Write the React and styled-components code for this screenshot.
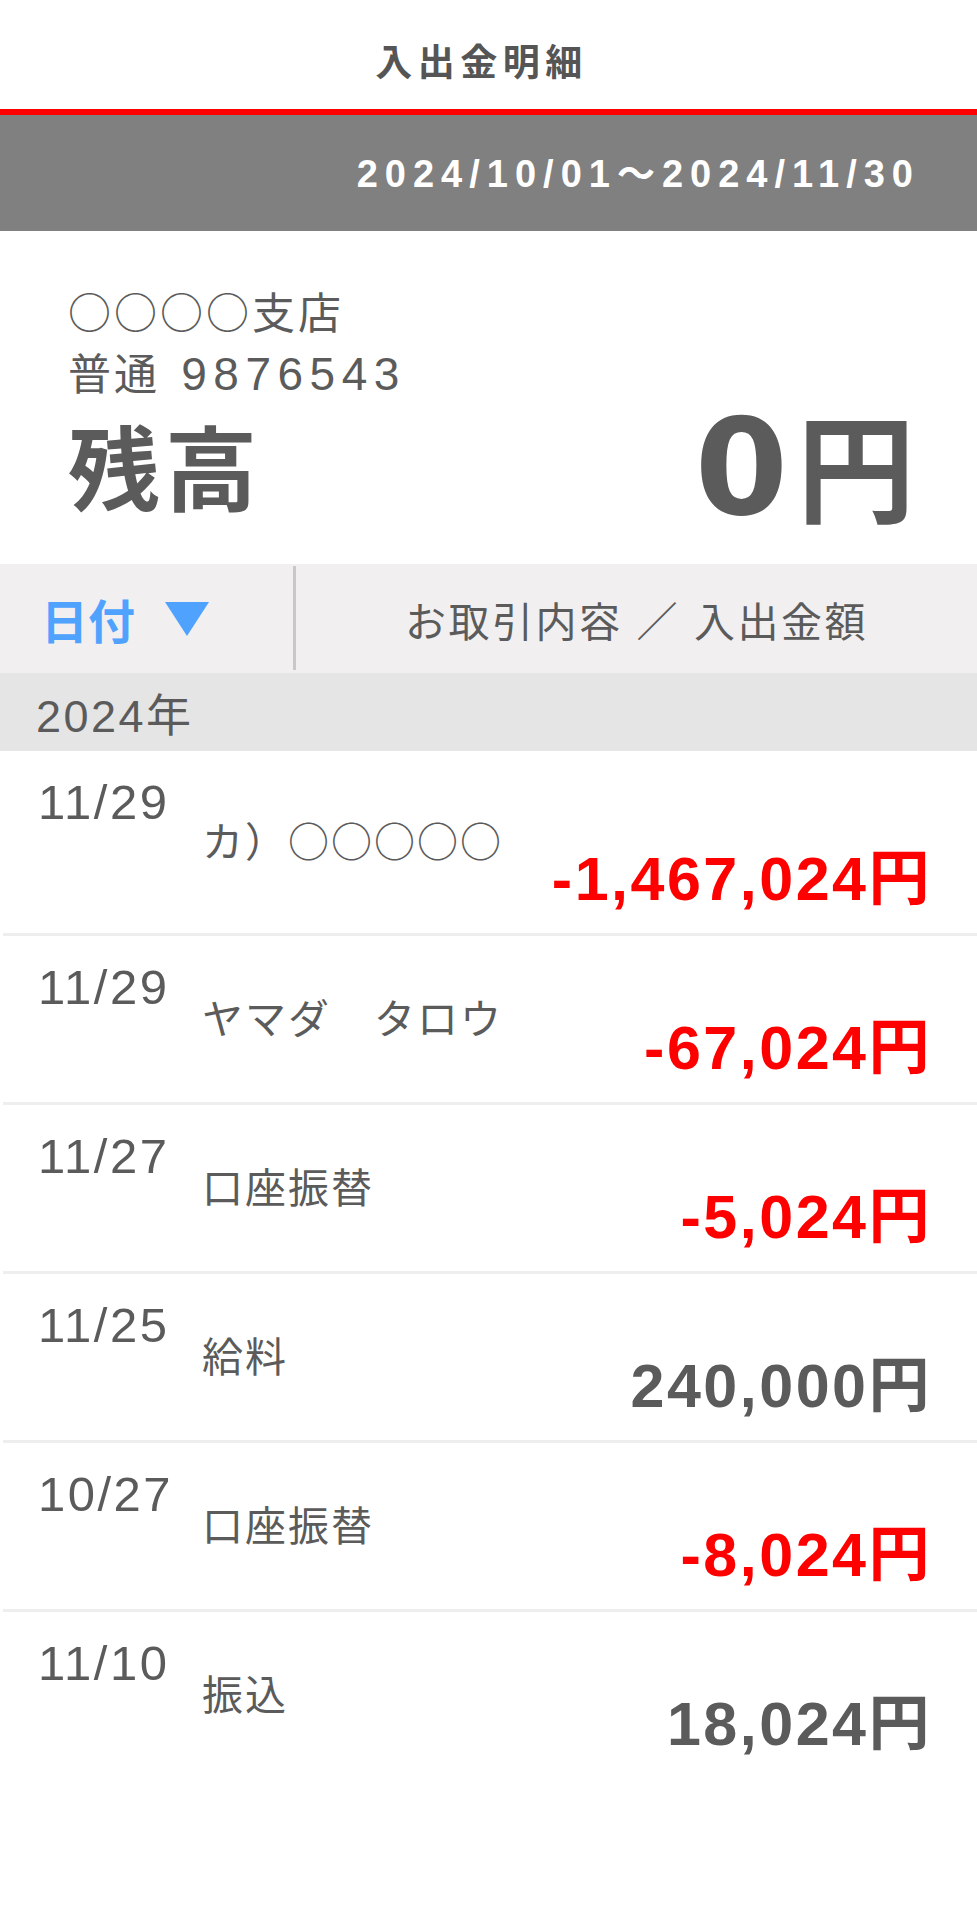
import React from "react";
import styled, { createGlobalStyle } from "styled-components";

const GlobalStyle = createGlobalStyle`
  html, body {
    margin: 0;
    padding: 0;
    background: #ffffff;
  }
  body {
    font-family: "Liberation Sans", "Noto Sans CJK JP", sans-serif;
    color: #5b5b5b;
  }
  * { box-sizing: border-box; }
`;

const Page = styled.div`
  width: 977px;
  min-height: 1926px;
  background: #ffffff;
`;

const Header = styled.header`
  height: 115px;
  padding: 18px 14px 0 0;
  border-bottom: 6px solid #ff0000;
  text-align: center;
`;

const Title = styled.h1`
  margin: 0;
  font-size: 37px;
  line-height: 91px;
  font-weight: 700;
  letter-spacing: 5.5px;
  color: #555555;
`;

const PeriodBar = styled.div`
  height: 116px;
  background: #808080;
  display: flex;
  align-items: center;
  justify-content: flex-end;
  padding: 0 57px 6px 0;
`;

const Period = styled.span`
  color: #ffffff;
  font-size: 38px;
  font-weight: 700;
  letter-spacing: 7px;
`;

const Account = styled.section`
  padding: 49px 62px 43px 68px;
`;

const InfoLine = styled.div`
  font-family: "Noto Sans CJK JP", "Liberation Sans", sans-serif;
  font-size: 43px;
  line-height: 61px;
  letter-spacing: 3px;
  color: #5b5b5b;
`;

const Number = styled.span`
  margin-left: 2px;
  font-family: "Liberation Sans", sans-serif;
  font-size: 46px;
  letter-spacing: 6.5px;
`;

const BalanceRow = styled.div`
  margin-top: 5px;
  display: flex;
  justify-content: space-between;
  align-items: flex-end;
`;

const BalanceLabel = styled.div`
  margin-bottom: 5px;
  font-size: 92px;
  line-height: 88px;
  font-weight: 700;
  letter-spacing: 5px;
  color: #5b5b5b;
`;

const BalanceValue = styled.div`
  font-family: "DejaVu Sans", "Noto Sans CJK JP", sans-serif;
  font-size: 134px;
  line-height: 106px;
  font-weight: 700;
  color: #5b5b5b;
`;

const Unit = styled.span`
  margin-left: 9px;
  font-family: "Noto Sans CJK JP", sans-serif;
  font-size: ${(p) => p.$size}px;
`;

const SortBar = styled.div`
  height: 109px;
  background: #f1eff0;
  display: grid;
  grid-template-columns: 293px 3px 1fr;
  align-items: center;
`;

const SortKey = styled.div`
  display: flex;
  align-items: center;
  gap: 30px;
  padding-left: 41px;
  color: #4fa3ff;
  font-size: 47px;
  font-weight: 700;
`;

const Divider = styled.div`
  align-self: stretch;
  margin: 2px 0 3px;
  background: #c8c8c8;
`;

const ColumnTitle = styled.div`
  text-align: center;
  font-size: 41px;
  letter-spacing: 2.5px;
  color: #5b5b5b;
`;

const YearRow = styled.div`
  height: 78px;
  background: #e5e5e5;
  display: flex;
  align-items: center;
  padding-left: 36px;
  font-size: 45px;
  letter-spacing: 2.5px;
  color: #5b5b5b;
`;

const List = styled.ul`
  list-style: none;
  margin: 0;
  padding: 0;
`;

const Item = styled.li`
  margin-left: 3px;
  padding: 33px 45px 41px 35px;
  border-bottom: ${(p) => (p.$last ? "none" : "3px solid #eeeeee")};
`;

const DateText = styled.div`
  font-size: 49px;
  line-height: 36px;
  letter-spacing: 2.5px;
  color: #5b5b5b;
`;

const Desc = styled.div`
  margin: -4px 0 4px;
  padding: ${(p) => (p.$tall ? "8px" : "0")} 0 ${(p) => (p.$tall ? "8px" : "0")} 164px;
  font-family: "Noto Sans CJK JP", "Liberation Sans", sans-serif;
  font-size: 41px;
  line-height: 30px;
  letter-spacing: 2px;
  color: #5b5b5b;
`;

const Amount = styled.div`
  text-align: right;
  font-size: 61px;
  line-height: 26px;
  font-weight: 700;
  letter-spacing: 2.5px;
  color: ${(p) => (p.$negative ? "#ff0000" : "#5b5b5b")};
`;

const Triangle = () => (
  <svg width="44" height="34" viewBox="0 0 44 34" aria-hidden="true">
    <polygon points="0,0 44,0 22,34" fill="#4fa3ff" />
  </svg>
);

const transactions = [
  { date: "11/29", desc: "カ）○○○○○", amount: "-1,467,024円", negative: true, tall: true },
  { date: "11/29", desc: "ヤマダ　タロウ", amount: "-67,024円", negative: true },
  { date: "11/27", desc: "口座振替", amount: "-5,024円", negative: true },
  { date: "11/25", desc: "給料", amount: "240,000円", negative: false },
  { date: "10/27", desc: "口座振替", amount: "-8,024円", negative: true },
  { date: "11/10", desc: "振込", amount: "18,024円", negative: false },
];

export default function App() {
  return (
    <Page>
      <GlobalStyle />
      <Header>
        <Title>入出金明細</Title>
      </Header>
      <PeriodBar>
        <Period>2024/10/01〜2024/11/30</Period>
      </PeriodBar>
      <Account>
        <InfoLine>○○○○支店</InfoLine>
        <InfoLine>
          普通<Number> 9876543</Number>
        </InfoLine>
        <BalanceRow>
          <BalanceLabel>残高</BalanceLabel>
          <BalanceValue>
            0<Unit $size={118}>円</Unit>
          </BalanceValue>
        </BalanceRow>
      </Account>
      <SortBar>
        <SortKey>
          日付
          <Triangle />
        </SortKey>
        <Divider />
        <ColumnTitle>お取引内容 ／ 入出金額</ColumnTitle>
      </SortBar>
      <YearRow>2024年</YearRow>
      <List>
        {transactions.map((t, i) => (
          <Item key={i} $last={i === transactions.length - 1}>
            <DateText>{t.date}</DateText>
            <Desc $tall={t.tall}>{t.desc}</Desc>
            <Amount $negative={t.negative}>{t.amount}</Amount>
          </Item>
        ))}
      </List>
    </Page>
  );
}
